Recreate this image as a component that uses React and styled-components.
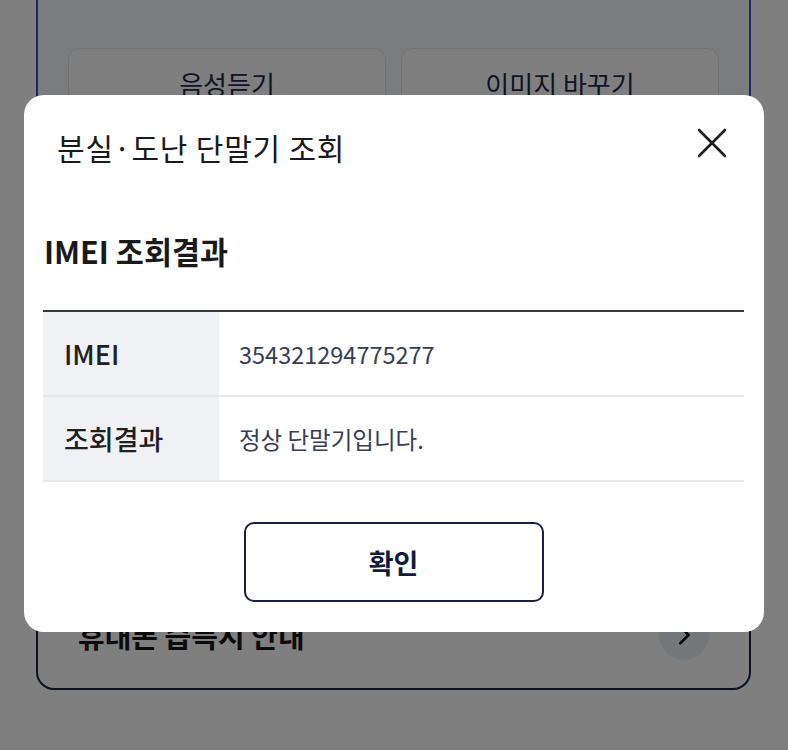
import React from "react";
import styled, { createGlobalStyle } from "styled-components";

const Global = createGlobalStyle`
  html, body { margin: 0; padding: 0; background: #ffffff; }
  body {
    font-family: "Noto Sans CJK KR", "Noto Sans", sans-serif;
    color: #1b1b1b;
    width: 788px;
    height: 750px;
    overflow: hidden;
  }
  * { box-sizing: border-box; }
`;

/* ---------- page under the dialog ---------- */

const Page = styled.main`
  display: flex;
  flex-direction: column;
  padding: 0 37px 0 36px;
  height: 750px;
`;

const CaptchaCard = styled.section`
  border: 2px solid #3350c4;
  border-top: none;
  background: #f5f9fc;
  padding: 48px 30px 24px 30px;
  height: 230px;
`;

const CaptchaActions = styled.div`
  display: grid;
  grid-template-columns: 1fr 1fr;
  gap: 15px;
`;

const GhostButton = styled.button`
  height: 76px;
  border: 1.5px solid #e2e5e9;
  border-radius: 12px;
  background: #ffffff;
  font-family: inherit;
  font-size: 26px;
  color: #1f2a4d;
  display: flex;
  align-items: flex-start;
  justify-content: center;
  padding-top: 16px;
`;

const GuideCard = styled.section`
  margin-top: auto;
  margin-bottom: 60px;
  height: 130px;
  border: 2px solid #1b2546;
  border-radius: 18px;
  background: #ffffff;
  display: flex;
  align-items: flex-end;
  justify-content: space-between;
  padding: 0 40px 28px 40px;
`;

const GuideTitle = styled.span`
  font-size: 29px;
  font-weight: 700;
  color: #161616;
  line-height: 50px;
`;

const ChevronCircle = styled.span`
  width: 50px;
  height: 50px;
  border-radius: 50%;
  background: #ebf0f4;
  display: flex;
  align-items: center;
  justify-content: center;
`;

const Dim = styled.div`
  position: fixed;
  inset: 0;
  background: rgba(0, 0, 0, 0.5);
  padding: 95px 24px 0 24px;
`;

/* ---------- dialog ---------- */

const Dialog = styled.div`
  width: 740px;
  height: 537px;
  background: #ffffff;
  border-radius: 20px;
  padding: 31px 20px 30px 19px;
  display: flex;
  flex-direction: column;
`;

const DialogHeader = styled.header`
  display: flex;
  align-items: flex-start;
  justify-content: space-between;
  padding: 0 17px 0 14px;
`;

const DialogTitle = styled.h2`
  margin: 0;
  font-size: 30px;
  font-weight: 400;
  line-height: 42px;
  color: #1a1a1a;
  letter-spacing: 0.8px;
`;

const CloseButton = styled.button`
  width: 30px;
  height: 30px;
  margin-top: 2px;
  padding: 0;
  border: none;
  background: none;
  display: flex;
  align-items: center;
  justify-content: center;
`;

const SectionTitle = styled.h3`
  margin: 62px 0 0 1px;
  font-size: 30.5px;
  font-weight: 700;
  line-height: 42px;
  color: #1a1a1a;
`;

const ResultTable = styled.dl`
  margin: 38px 0 0 0;
  border-top: 2px solid #3a3a3a;
`;

const Row = styled.div`
  display: grid;
  grid-template-columns: 176px 1fr;
  height: 85px;
  border-bottom: 2px solid #e6e7e9;
`;

const Label = styled.dt`
  background: #eff1f5;
  display: flex;
  align-items: center;
  padding-left: 21px;
  font-size: 27px;
  font-weight: 500;
  color: #202020;
`;

const Value = styled.dd`
  margin: 0;
  display: flex;
  align-items: center;
  padding-left: 20px;
  font-size: 23.5px;
  color: #363d55;
`;

const Footer = styled.div`
  margin-top: auto;
  display: flex;
  justify-content: center;
`;

const ConfirmButton = styled.button`
  width: 300px;
  height: 80px;
  border: 2px solid #17213f;
  border-radius: 10px;
  background: #ffffff;
  font-family: inherit;
  font-size: 27px;
  font-weight: 700;
  color: #121a3a;
`;

export default function App() {
  return (
    <>
      <Global />
      <Page>
        <CaptchaCard>
          <CaptchaActions>
            <GhostButton>음성듣기</GhostButton>
            <GhostButton>이미지 바꾸기</GhostButton>
          </CaptchaActions>
        </CaptchaCard>
        <GuideCard>
          <GuideTitle>휴대폰 습득시 안내</GuideTitle>
          <ChevronCircle>
            <svg width="22" height="22" viewBox="0 0 24 24" fill="none">
              <path d="M8 3l9 9-9 9" stroke="#1a1a1a" strokeWidth="3" strokeLinecap="round" strokeLinejoin="round" />
            </svg>
          </ChevronCircle>
        </GuideCard>
      </Page>

      <Dim>
        <Dialog role="dialog" aria-modal="true">
          <DialogHeader>
            <DialogTitle>분실·도난 단말기 조회</DialogTitle>
            <CloseButton aria-label="닫기">
              <svg width="30" height="30" viewBox="0 0 30 30" fill="none">
                <path d="M2 2l26 26M28 2L2 28" stroke="#1c1c1c" strokeWidth="2.6" strokeLinecap="round" />
              </svg>
            </CloseButton>
          </DialogHeader>

          <SectionTitle>IMEI 조회결과</SectionTitle>

          <ResultTable>
            <Row>
              <Label>IMEI</Label>
              <Value>354321294775277</Value>
            </Row>
            <Row>
              <Label>조회결과</Label>
              <Value>정상 단말기입니다.</Value>
            </Row>
          </ResultTable>

          <Footer>
            <ConfirmButton>확인</ConfirmButton>
          </Footer>
        </Dialog>
      </Dim>
    </>
  );
}
